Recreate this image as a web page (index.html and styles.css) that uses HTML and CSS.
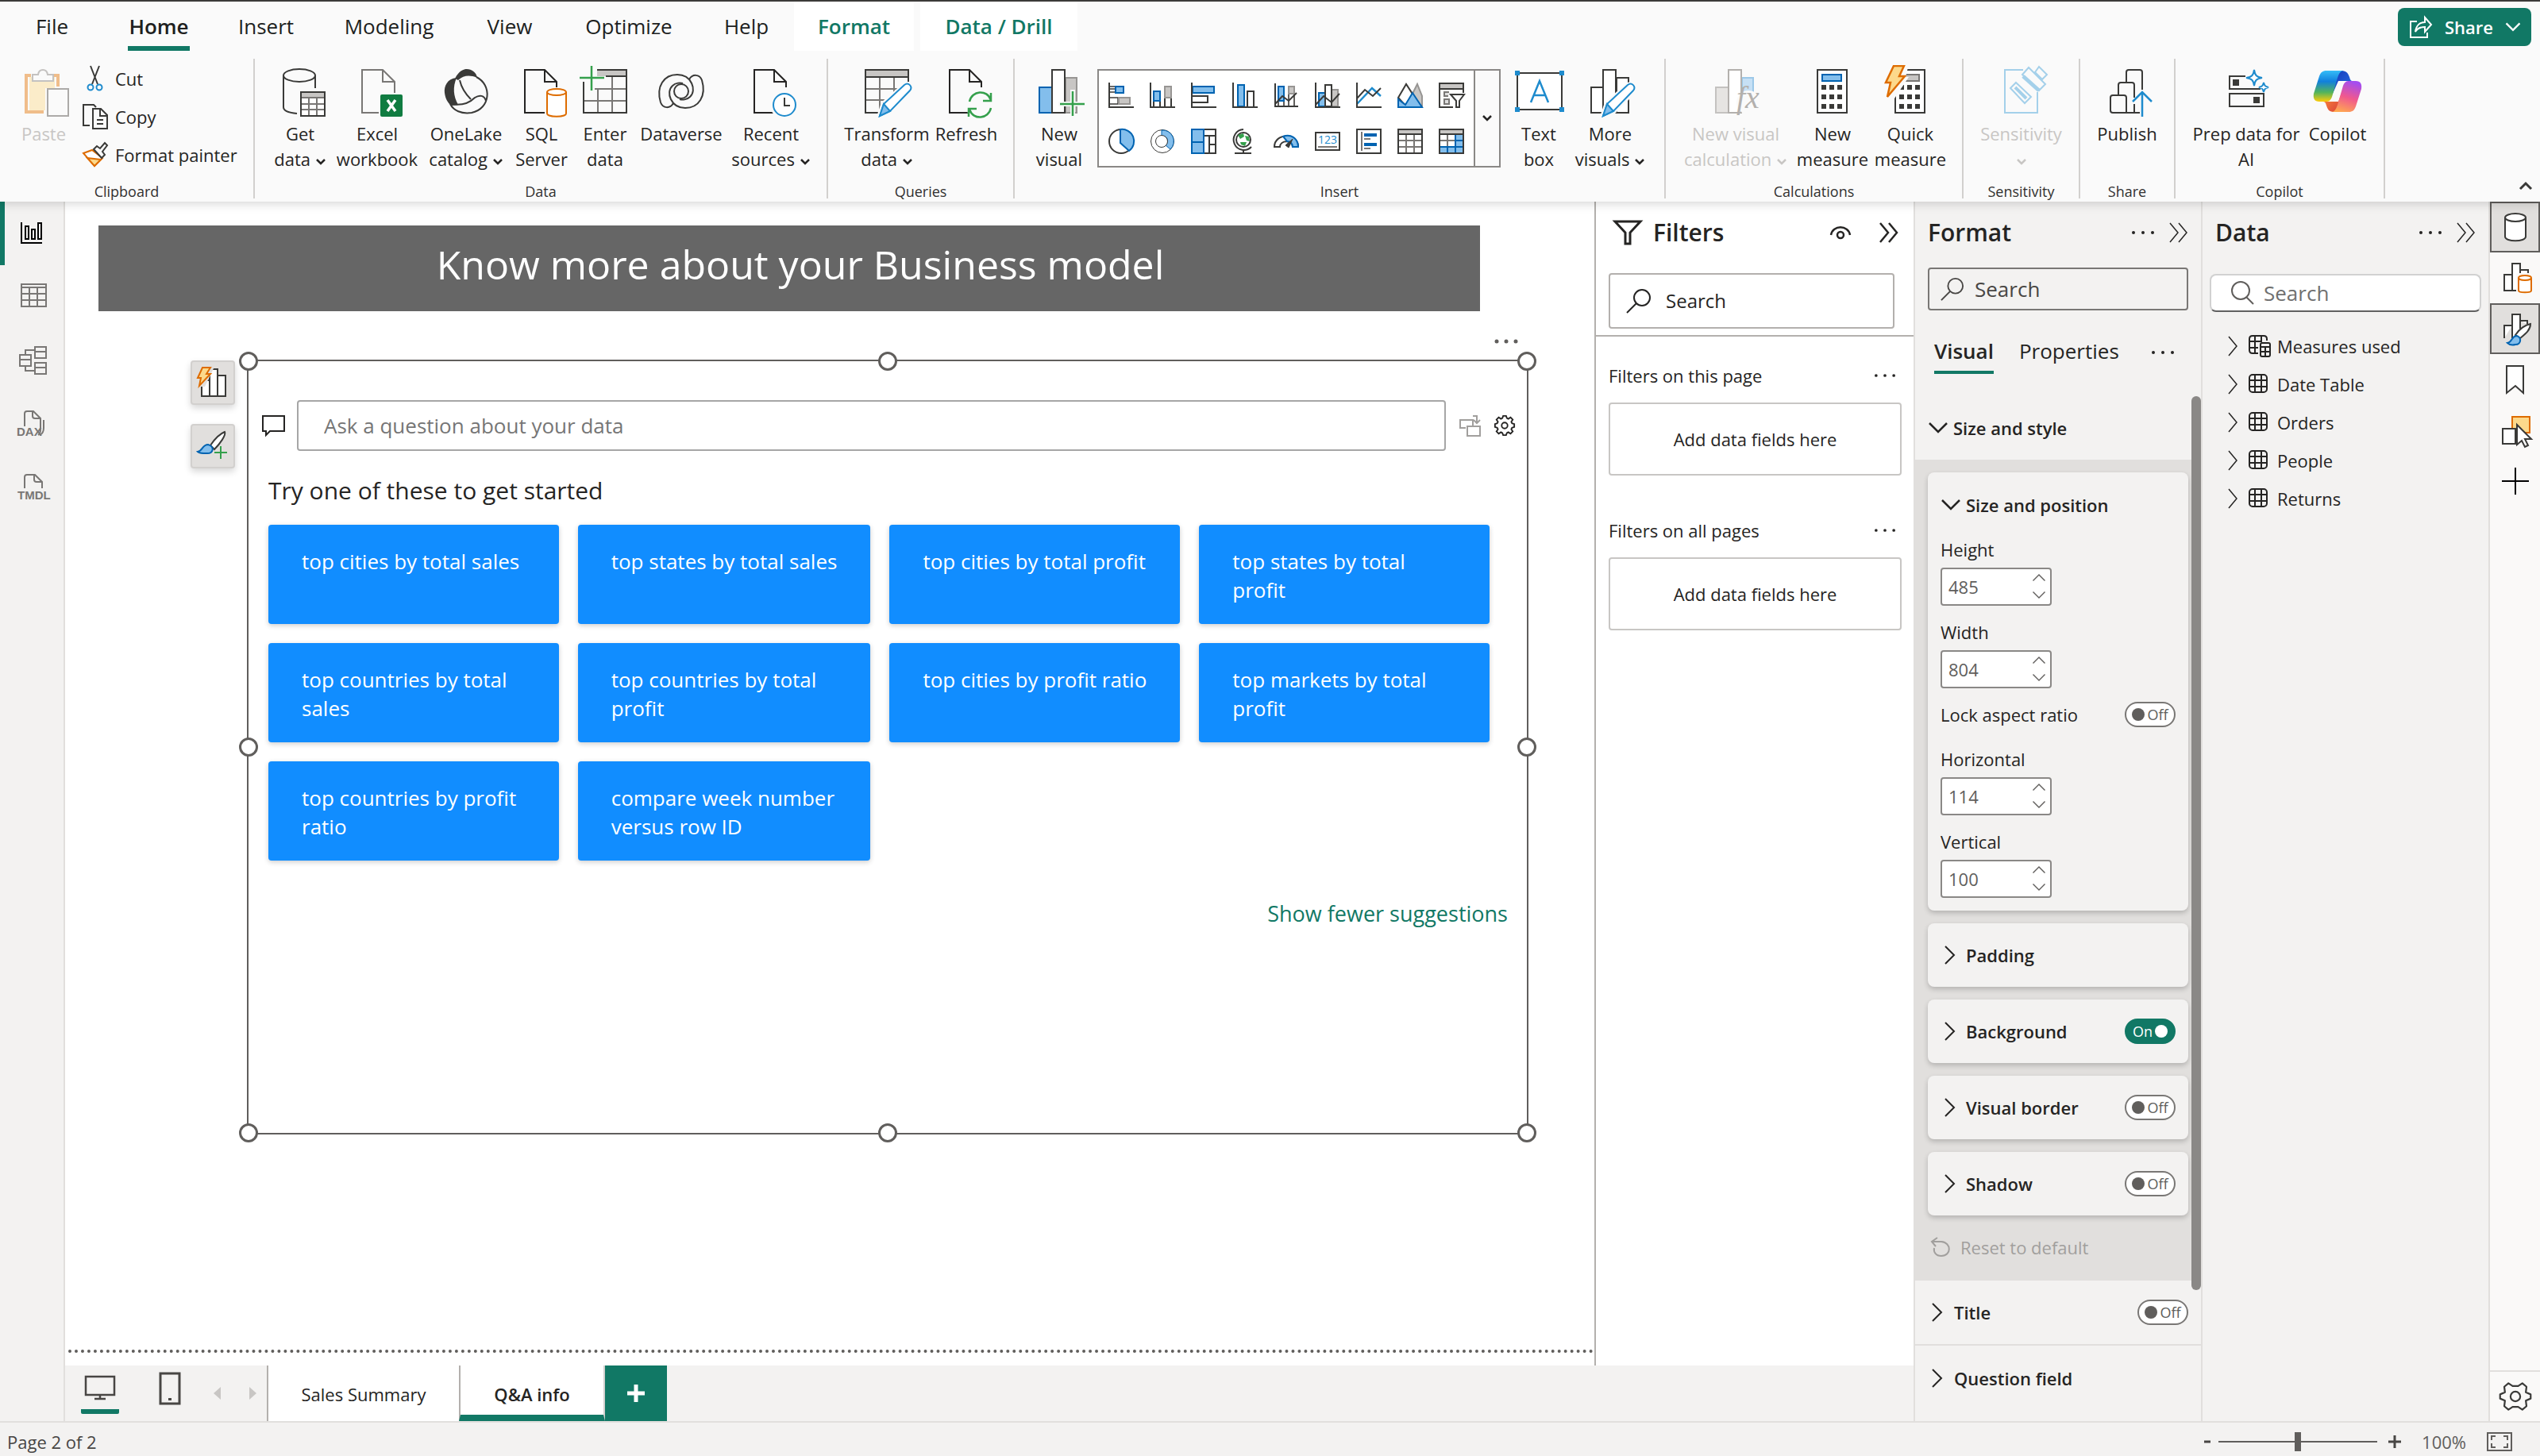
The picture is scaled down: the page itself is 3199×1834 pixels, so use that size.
FILE: index.html
```html
<!DOCTYPE html>
<html lang="en">
<head>
<meta charset="utf-8">
<title>Report editor</title>
<link rel="stylesheet" href="styles.css">
</head>
<body>
<svg class="defs" aria-hidden="true">
  <defs>
    <linearGradient id="cpA" x1="0" y1="0" x2="0" y2="1"><stop offset="0" stop-color="#35bdf8"/><stop offset=".35" stop-color="#1180dc"/><stop offset=".7" stop-color="#52b45c"/><stop offset="1" stop-color="#ffcc0a"/></linearGradient>
    <linearGradient id="cpB" x1=".6" y1="0" x2=".3" y2="1"><stop offset="0" stop-color="#a44df0"/><stop offset=".5" stop-color="#f0588e"/><stop offset="1" stop-color="#ffa850"/></linearGradient>
    <linearGradient id="cpC" x1="0" y1="0" x2="1" y2="1"><stop offset="0" stop-color="#1438b8"/><stop offset="1" stop-color="#2a72e8"/></linearGradient>
    <linearGradient id="cpD" x1="0" y1="0" x2="1" y2="1"><stop offset="0" stop-color="#ff9a3c"/><stop offset="1" stop-color="#d83a3a"/></linearGradient>
  </defs>
  <symbol id="drop" viewBox="0 0 14 10"><path d="M2 2l5 5 5-5" fill="none" stroke="currentColor" stroke-width="2.500"/></symbol>
  <symbol id="right" viewBox="0 0 16 26"><path d="M2 2l11 11L2 24" fill="none" stroke="currentColor" stroke-width="2"/></symbol>
  <symbol id="thin" viewBox="0 0 16 26"><path d="M2 1l10 12L2 25" fill="none" stroke="currentColor" stroke-width="1.500"/></symbol>
  <symbol id="down" viewBox="0 0 26 16"><path d="M2 2l11 11L24 2" fill="none" stroke="currentColor" stroke-width="2.5"/></symbol>
  <symbol id="collapse" viewBox="0 0 26 26"><path d="M2 1l10 12L2 25M13 1l10 12-10 12" fill="none" stroke="currentColor" stroke-width="1.500"/></symbol>
  <symbol id="dots" viewBox="0 0 32 8"><g fill="currentColor"><circle cx="4" cy="4" r="2"/><circle cx="16" cy="4" r="2"/><circle cx="28" cy="4" r="2"/></g></symbol>
  <symbol id="find" viewBox="0 0 32 32"><g fill="none" stroke="currentColor" stroke-width="2"><circle cx="20" cy="12" r="10"/><path d="M13 19L1 31"/></g></symbol>
  <symbol id="table" viewBox="0 0 28 28"><g fill="none" stroke="currentColor" stroke-width="2"><rect x="3" y="2" width="22" height="22" rx="4"/><path d="M3 9h22M3 17h22M10 2v22M18 2v22"/></g></symbol>
  <symbol id="doc" viewBox="0 0 64 64"><path d="M36 57H11V3h25l15 15v7M36 3v15h15" fill="none" stroke="currentColor" stroke-width="2"/></symbol>
  <symbol id="pencil" viewBox="0 0 64 64"><path d="M23 61l5-15 26-23c5-4 11 2 7 7L36 55z" fill="#fafafa" stroke="#fafafa" stroke-width="7"/><path d="M23 61l5-15 26-24c5-4 11 2 7 7L36 55z" fill="#fff" stroke="#1e8bcd" stroke-width="2"/><path d="M23 61l5-15 8 9z" fill="#83beec" stroke="#1e8bcd" stroke-width="2"/></symbol>
  <symbol id="bolt" viewBox="0 0 28 42"><path d="M12 1h13l-6 13h7L4 40l4-18H2z" fill="#fcd98b" stroke="#de6c00" stroke-width="2.5"/></symbol>
</svg>

<header class="ribbon">
  <div class="topbar">
    <nav class="menu" aria-label="Ribbon tabs">
      <a href="#">File</a><a href="#" class="on">Home</a><a href="#">Insert</a><a href="#">Modeling</a><a href="#">View</a><a href="#">Optimize</a><a href="#">Help</a><a href="#" class="ctx">Format</a><a href="#" class="ctx drill">Data / Drill</a>
    </nav>
    <button class="share"><svg width="30" height="30" viewBox="0 0 30 30"><path d="M10 8H2v20h21v-6M8 21c1-8 6-12 12-12V3l8 9-8 9v-6c-5 0-9 1-12 6z" fill="none" stroke="#fff" stroke-width="2"/></svg>Share<svg width="20" height="14" viewBox="0 0 26 16"><path d="M2 2l11 11L24 2" fill="none" stroke="#fff" stroke-width="3"/></svg></button>
  </div>
  <div class="tools">
    <section class="group clipboard">
      <div class="items">
        <button class="tool" disabled><svg class="big" viewBox="0 0 64 64"><path d="M16 10H10v46h22M44 10h6v14" fill="none" stroke="#f0bd8a" stroke-width="4"/><path d="M14 12h32v14H34v28H14z" fill="#fbecc9"/><path d="M18 17V9h7c1-8 11-8 12 0h7v8z" fill="#fafafa" stroke="#c4c2c0" stroke-width="2"/><rect x="37" y="27" width="26" height="34" fill="#fafafa" stroke="#acaaa8" stroke-width="2"/></svg>Paste</button>
        <div class="rows">
          <button><svg width="32" height="32" viewBox="0 0 32 32"><g fill="none" stroke="#3a3a38" stroke-width="2"><path d="M10 0l9 23M21 0l-9 23"/><g stroke="#1e8bcd"><circle cx="10" cy="27" r="3.500"/><circle cx="21" cy="27" r="3.500"/></g></g></svg>Cut</button>
          <button><svg width="32" height="32" viewBox="0 0 32 32"><g fill="none" stroke="#3a3a38" stroke-width="2"><path d="M9 27H1V1h13l3 3"/><path d="M13 31V6h10l8 8v17zM22 6v9h9M18 20h8M18 25h8"/></g></svg>Copy</button>
          <button><svg width="32" height="32" viewBox="0 0 32 32"><path d="M1 14l11-4 13 10-10 10z" fill="#fff" stroke="#de6c00" stroke-width="2"/><path d="M6 20l17 2-8 8z" fill="#fcd98b" stroke="#de6c00" stroke-width="2"/><path d="M14 9l4-4 4 3 6-7 3 3-6 8 3 4-4 4z" fill="#fafafa" stroke="#3a3a38" stroke-width="2"/></svg>Format painter</button>
        </div>
      </div>
      <h2>Clipboard</h2>
    </section>
    <section class="group data">
      <div class="items">
        <button class="tool"><svg class="big" viewBox="0 0 64 64"><g fill="none" stroke="#3a3a38" stroke-width="2"><ellipse cx="31" cy="10" rx="20" ry="8"/><path d="M11 10v40c0 4 6 7 17 8M51 10v16"/><path d="M33 31h30v30H33z" fill="#fff"/></g><path d="M34 32h28v6H34z" fill="#c8c6c4"/><path d="M34 38h28M34 46h28M34 53h28M43 38v22M53 38v22" stroke="#797775" stroke-width="2"/></svg>Get<br>data <svg class="dd"><use href="#drop"/></svg></button>
        <button class="tool"><svg class="big" viewBox="0 0 64 64"><path d="M34 57H13V3h26l15 15v14M39 3v15h15" fill="none" stroke="#797775" stroke-width="2"/><rect x="36" y="34" width="28" height="28" rx="2" fill="#107c41"/><path d="M45 41l10 14M55 41L45 55" stroke="#fff" stroke-width="3.5"/></svg>Excel<br>workbook</button>
        <button class="tool"><svg class="big" viewBox="0 0 64 64"><path d="M20 13C8 14 4 24 5 32c1 8 4 12 8 16l9-1c-6-11-7-22-2-34z" fill="#3a3a38"/><path d="M18 14C23 4 29 2 33 2c6 0 12 4 13 11-10-4-17-3-24 3z" fill="#3a3a38"/><path d="M45 12c20 10 18 40-6 45-13 2-23-3-27-11M24 16c2 9 7 17 14 24M12 46c11 2 22 1 31-8 6-4 12-3 14 4" fill="none" stroke="#3a3a38" stroke-width="2"/></svg>OneLake<br>catalog <svg class="dd"><use href="#drop"/></svg></button>
        <button class="tool"><svg class="big" viewBox="0 0 64 64"><use href="#doc"/><path d="M36 26h30v40H36z" fill="#fafafa"/><g fill="#fff" stroke="#de6c00" stroke-width="2"><path d="M39 31v27c0 5 24 5 24 0V31"/><ellipse cx="51" cy="31" rx="12" ry="4"/></g></svg>SQL<br>Server</button>
        <button class="tool"><svg class="big" viewBox="0 0 64 64"><path d="M22 4h37v7H22z" fill="#c8c6c4"/><path d="M19 27h40M5 42h54M23 27v30M41 12v45" stroke="#797775" stroke-width="2"/><path d="M22 3h37v54H5V18M33 11h26" fill="none" stroke="#3a3a38" stroke-width="2"/><path d="M15 -2v31M0 13h31" stroke="#35a04c" stroke-width="2.5"/></svg>Enter<br>data</button>
        <button class="tool"><svg class="big" viewBox="0 0 64 64"><g fill="none" stroke="#3a3a38" stroke-width="2"><path id="dv" d="M22 45C18 52 9 52 6 44 0 24 10 9 27 9c18 0 25 20 16 28-4 4-10 4-13 3"/><use href="#dv" transform="rotate(180 32 30)"/><circle cx="32" cy="30" r="9"/></g></svg>Dataverse</button>
        <button class="tool"><svg class="big" viewBox="0 0 64 64"><use href="#doc"/><circle cx="49" cy="47" r="18" fill="#fafafa"/><circle cx="49" cy="47" r="14" fill="#fff" stroke="#1e8bcd" stroke-width="2"/><path d="M49 38v10h7" fill="none" stroke="#3a3a38" stroke-width="2"/></svg>Recent<br>sources <svg class="dd"><use href="#drop"/></svg></button>
      </div>
      <h2>Data</h2>
    </section>
    <section class="group queries">
      <div class="items">
        <button class="tool"><svg class="big" viewBox="0 0 64 64"><path d="M5 4h54v7H5z" fill="#c8c6c4"/><path d="M5 27h54M5 41h40M23 12v45M41 12v30" stroke="#797775" stroke-width="2"/><path d="M59 18V3H5v54h20M5 12h54" fill="none" stroke="#3a3a38" stroke-width="2"/><use href="#pencil"/></svg>Transform<br>data <svg class="dd"><use href="#drop"/></svg></button>
        <button class="tool"><svg class="big" viewBox="0 0 64 64"><use href="#doc"/><circle cx="49" cy="47" r="18" fill="#fafafa"/><path d="M36 43c3-14 22-16 27-2M63 32v10H53M63 51c-3 14-22 16-27 2M35 62V52h10" fill="none" stroke="#35a04c" stroke-width="2.5"/></svg>Refresh</button>
      </div>
      <h2>Queries</h2>
    </section>
    <section class="group insert">
      <div class="items">
        <button class="tool"><svg class="big" viewBox="0 0 64 64"><path d="M7 25h16v32H7z" fill="#83beec" stroke="#0063b1" stroke-width="2"/><path d="M40 13h14v44H40z" fill="#c8c6c4" stroke="#979593" stroke-width="2"/><path d="M23 3h16v54H23z" fill="#fff" stroke="#3a3a38" stroke-width="2"/><path d="M49 28v36M31 46h34" stroke="#fafafa" stroke-width="6"/><path d="M49 30v31M33 46h31" stroke="#35a04c" stroke-width="2.5"/></svg>New<br>visual</button>
        <div class="gallery">
          <div class="cells">
            <button aria-label="Stacked bar chart"><svg viewBox="0 0 32 32"><path d="M1 8h8M1 12h8M1 19h12M1 27h12M1 5h8M12 19v8" stroke="#3a3a38" stroke-width="1.5" fill="none"/><path d="M9 5h10v8H9z" fill="#83beec" stroke="#0063b1" stroke-width="2"/><path d="M13 19h14v8H13z" fill="#c8c6c4" stroke="#979593" stroke-width="2"/><path d="M1 0v31h31" fill="none" stroke="#3a3a38" stroke-width="2"/></svg></button>
            <button aria-label="Stacked column chart"><svg viewBox="0 0 32 32"><path d="M5 24v7M13 24v7M19 20v11M27 20v11" stroke="#3a3a38" stroke-width="2"/><path d="M5 11h8v12H5z" fill="#83beec" stroke="#0063b1" stroke-width="2"/><path d="M19 5h8v14h-8z" fill="#c8c6c4" stroke="#979593" stroke-width="2"/><path d="M1 0v31h31" fill="none" stroke="#3a3a38" stroke-width="2"/></svg></button>
            <button aria-label="Clustered bar chart"><svg viewBox="0 0 32 32"><path d="M1 17h20v8H1z" fill="#fff" stroke="#3a3a38" stroke-width="2"/><path d="M2 5h27v8H2z" fill="#83beec" stroke="#0063b1" stroke-width="2"/><path d="M1 0v31h31" fill="none" stroke="#3a3a38" stroke-width="2"/></svg></button>
            <button aria-label="Clustered column chart"><svg viewBox="0 0 32 32"><path d="M19 11h8v20h-8z" fill="#fff" stroke="#3a3a38" stroke-width="2"/><path d="M7 3h8v27H7z" fill="#83beec" stroke="#0063b1" stroke-width="2"/><path d="M1 0v31h31" fill="none" stroke="#3a3a38" stroke-width="2"/></svg></button>
            <button aria-label="Line and stacked column chart"><svg viewBox="0 0 32 32"><path d="M6 24v6M13 24v6M19 14v16M26 14v16" stroke="#605e5c" stroke-width="2"/><path d="M6 5h7v18H6z" fill="#83beec" stroke="#0063b1" stroke-width="2"/><path d="M19 5h7v9h-7z" fill="#c8c6c4" stroke="#979593" stroke-width="2"/><path d="M2 1v29h29M2 27l9-10 8 6 10-10" fill="none" stroke="#3a3a38" stroke-width="2"/></svg></button>
            <button aria-label="Line and clustered column chart"><svg viewBox="0 0 32 32"><path d="M5 13h8v17H5z" fill="#83beec" stroke="#0063b1" stroke-width="2"/><path d="M21 9h8v21h-8z" fill="#c8c6c4" stroke="#979593" stroke-width="2"/><path d="M13 3h8v27h-8z" fill="#fff" stroke="#3a3a38" stroke-width="2"/><path d="M1 0v31h31M1 28l10-11 10 8 10-11" fill="none" stroke="#3a3a38" stroke-width="2"/></svg></button>
            <button aria-label="Line chart"><svg viewBox="0 0 32 32"><path d="M1 27L20 7l11 10" fill="none" stroke="#1e8bcd" stroke-width="2.5"/><path d="M1 20L11 9l10 8L31 7M1 0v31h31" fill="none" stroke="#3a3a38" stroke-width="2"/></svg></button>
            <button aria-label="Area chart"><svg viewBox="0 0 32 32"><path d="M18 16l7-14 6 15v14" fill="#c8c6c4" stroke="#979593" stroke-width="2"/><path d="M1 19L11 2l11 17-11 11z" fill="#fff" stroke="#3a3a38" stroke-width="2"/><path d="M1 21l9 7 9-15 12 18H1z" fill="#83beec" stroke="#0063b1" stroke-width="2"/></svg></button>
            <button aria-label="Slicer"><svg viewBox="0 0 32 32"><path d="M1 2h30v5H1z" fill="#c8c6c4"/><path d="M31 13V1H1v30h17M1 8h30" fill="none" stroke="#3a3a38" stroke-width="2"/><path d="M13 12H7v5h5M7 21h6v6H7z" fill="#ddd" stroke="#797775" stroke-width="2"/><path d="M15 15h17l-6 8v8h-4v-8z" fill="#fff" stroke="#3a3a38" stroke-width="2"/></svg></button>
            <button aria-label="Pie chart"><svg viewBox="0 0 32 32"><circle cx="16" cy="16" r="15" fill="#fff" stroke="#3a3a38" stroke-width="2"/><path d="M15 1v17l11 10a15 15 0 0 0-11-27z" fill="#83beec" stroke="#0063b1" stroke-width="2"/></svg></button>
            <button aria-label="Donut chart"><svg viewBox="0 0 32 32"><g fill="#fff" stroke="#3a3a38"><circle cx="16" cy="16" r="14.500"/></g><path d="M15 2v7c9 0 9 9 5 12l6 5A14 14 0 0 0 15 2z" fill="#83beec" stroke="#0063b1"/><circle cx="15" cy="16" r="7.500" fill="#fff" stroke="#3a3a38"/></svg></button>
            <button aria-label="Treemap"><svg viewBox="0 0 32 32"><path d="M16 1h15v30H16zM16 9h15M23 9v22M23 20h8" fill="#fff" stroke="#3a3a38" stroke-width="2"/><path d="M1 1h15v30H1zM1 17h15" fill="#83beec" stroke="#0063b1" stroke-width="2"/></svg></button>
            <button aria-label="Map"><svg viewBox="0 0 32 32"><circle cx="14" cy="14" r="9" fill="#fff" stroke="#3a3a38" stroke-width="2"/><path d="M7 8l7-2 1 4-5 3zM16 9l5 1 1 6-4-1zM10 17l8 0-2 5-5-2z" fill="#35a04c"/><path d="M14 1A13 13 0 1 0 24 23M14 27v4M3 31h21" fill="none" stroke="#3a3a38" stroke-width="2"/></svg></button>
            <button aria-label="Gauge"><svg viewBox="0 0 32 32"><path d="M1 23c0-18 30-18 30 0h-7c0-9-16-9-16 0z" fill="#fff" stroke="#3a3a38" stroke-width="2"/><path d="M12 10c9-4 19 2 19 13h-7c0-4-3-7-7-7z" fill="#83beec" stroke="#0063b1" stroke-width="2"/><path d="M24 13l-9 8 4 3z" fill="#3a3a38" stroke="#3a3a38"/></svg></button>
            <button aria-label="Card"><svg viewBox="0 0 32 32"><path d="M1 5h30v22H1z" fill="#fff" stroke="#3a3a38" stroke-width="2"/><path d="M4 23h24" stroke="#797775" stroke-width="2"/><text x="4" y="19" class="num">123</text></svg></button>
            <button aria-label="Multi-row card"><svg viewBox="0 0 32 32"><path d="M1 1h30v30H1z" fill="#fff" stroke="#3a3a38" stroke-width="2"/><path d="M7 4v24M10 13h8M10 25h8" stroke="#797775" stroke-width="2"/><path d="M10 8h16M10 20h16" stroke="#0063b1" stroke-width="4"/></svg></button>
            <button aria-label="Table"><svg viewBox="0 0 32 32"><path d="M1 2h30v5H1z" fill="#c8c6c4"/><path d="M1 15h30M1 23h30M11 8v23M21 8v23" stroke="#797775" stroke-width="2"/><path d="M1 1h30v30H1zM1 7h30" fill="none" stroke="#3a3a38" stroke-width="2"/></svg></button>
            <button aria-label="Matrix"><svg viewBox="0 0 32 32"><path d="M1 2h30v5H1z" fill="#c8c6c4"/><path d="M1 23h20V8h10v23H1z" fill="#83beec"/><path d="M1 15h20M11 8v15" stroke="#797775" stroke-width="2"/><path d="M1 23h30M21 8v23M11 23v8M21 15h10" stroke="#0063b1" stroke-width="2"/><path d="M1 1h30v30H1zM1 7h30" fill="none" stroke="#3a3a38" stroke-width="2"/></svg></button>
          </div>
          <button class="more" aria-label="More visual types"><svg class="dd"><use href="#drop"/></svg></button>
        </div>
        <button class="tool"><svg class="big" viewBox="0 0 64 64"><path d="M4 7h56v46H4z" fill="#fff" stroke="#3a3a38" stroke-width="2"/><path d="M1 4h6v6H1zM57 4h6v6h-6zM1 50h6v6H1zM57 50h6v6h-6z" fill="#1e8bcd"/><path d="M21 44L32 17l11 27M24 35h16" fill="none" stroke="#1e8bcd" stroke-width="2.500"/></svg>Text<br>box</button>
        <button class="tool"><svg class="big" viewBox="0 0 64 64"><g fill="#fff" stroke="#3a3a38" stroke-width="2"><path d="M8 25h15v32H8zM40 13h15v44H40zM23 3h16v54H23z"/></g><use href="#pencil"/></svg>More<br>visuals <svg class="dd"><use href="#drop"/></svg></button>
      </div>
      <h2>Insert</h2>
    </section>
    <section class="group calc">
      <div class="items">
        <button class="tool" disabled><svg class="big" viewBox="0 0 64 64"><path d="M7 25h16v32H7z" fill="#e6e4e2" stroke="#c4c2c0" stroke-width="2"/><path d="M40 13h14v20H40z" fill="#c6e0f5" stroke="#9cc8e8" stroke-width="2"/><path d="M23 57V3h16v54z" fill="#fff" stroke="#b3b0ad" stroke-width="2"/><circle cx="48" cy="44" r="15" fill="#fafafa"/><text x="33" y="51" class="fx">fx</text></svg>New visual<br>calculation <svg class="dd"><use href="#drop"/></svg></button>
        <button class="tool"><svg class="big" viewBox="0 0 64 64"><path id="calc" d="M13 3h37v54H13z" fill="#fff" stroke="#3a3a38" stroke-width="2"/><path d="M19 9h24v8H19z" fill="#83beec" stroke="#0063b1" stroke-width="2"/><path id="keys" d="M18 25h26M18 37h26M18 49h26" stroke="#3a3a38" stroke-width="6" stroke-dasharray="6 4"/></svg>New<br>measure</button>
        <button class="tool"><svg class="big" viewBox="0 0 64 64"><use href="#calc"/><path d="M19 9h24v8H19z" fill="#c8c6c4" stroke="#797775" stroke-width="2"/><use href="#keys"/><path d="M12 -4h18L26 12h4L10 42-2 24z" fill="#fafafa"/><svg x="-1" y="-3" width="28" height="42"><use href="#bolt"/></svg></svg>Quick<br>measure</button>
      </div>
      <h2>Calculations</h2>
    </section>
    <section class="group sens">
      <div class="items">
        <button class="tool" disabled><svg class="big" viewBox="0 0 64 64"><g fill="none" stroke="#a4d0ea" stroke-width="2"><path d="M34 3H11v54h41V31"/><path d="M25 19l19 18-8 8-18-19z"/><path d="M24 25l14 14" stroke-width="4"/><path d="M41 0l21 21-8 8L33 9z"/><path d="M34 11l20 18" stroke-width="5"/><path d="M49 6l5-7 10 10-6 6z"/></g></svg>Sensitivity<br><svg class="dd"><use href="#drop"/></svg></button>
      </div>
      <h2>Sensitivity</h2>
    </section>
    <section class="group pub">
      <div class="items">
        <button class="tool"><svg class="big" viewBox="0 0 64 64"><g fill="none" stroke="#3a3a38" stroke-width="2"><path d="M31 19V6q0-3 3-3h14q3 0 3 3v22M21 34V22q0-3 3-3h14q3 0 3 3v16M41 46v11"/><path d="M48 57H14q-3 0-3-3V38q0-3 3-3h14q3 0 3 3v19"/></g><path d="M51 62V32M39 43l12-12 12 12" fill="none" stroke="#1e8bcd" stroke-width="2.500"/></svg>Publish</button>
      </div>
      <h2>Share</h2>
    </section>
    <section class="group cop">
      <div class="items">
        <button class="tool"><svg class="big" viewBox="0 0 64 64"><g fill="none" stroke="#3a3a38" stroke-width="2"><path d="M31 11H11v16h39M11 33h43v16H11z"/></g><path d="M15 15h8v8h-8zM41 37h8v8h-8z" fill="#3a3a38"/><path d="M42 3c1 7 3 9 10 10-7 1-9 3-10 10-1-7-3-9-10-10 7-1 9-3 10-10zM54 19c1 4 2 5 6 6-4 1-5 2-6 6-1-4-2-5-6-6 4-1 5-2 6-6z" fill="#fff" stroke="#1e8bcd" stroke-width="2"/></svg>Prep data for<br>AI</button>
        <button class="tool"><svg class="big" viewBox="0 0 64 64"><path d="M36 4c6 0 9 2 11 8 1 4 2 5 4 5H33l-8 18 5-28z" fill="url(#cpC)"/><path d="M28 56c-6 0-8-2-10-8-1-4-2-5-5-5h20l6-16-5 26z" fill="url(#cpD)"/><path d="M18 4h22c-4 0-6 3-8 9l-7 24c-2 5-4 6-8 6H9c-6 0-8-4-7-10L9 11c2-5 4-7 9-7z" fill="url(#cpA)"/><path d="M46 56H24c4 0 6-3 8-9l7-24c2-5 4-6 8-6h8c6 0 8 4 7 10l-7 22c-2 5-4 7-9 7z" fill="url(#cpB)"/></svg>Copilot</button>
      </div>
      <h2>Copilot</h2>
    </section>
    <button class="fold" aria-label="Collapse ribbon"><svg width="18" height="12" viewBox="0 0 18 12"><path d="M2 10l7-7 7 7" fill="none" stroke="#3a3a38" stroke-width="3"/></svg></button>
  </div>
</header>

<main>
  <nav class="views" aria-label="Views">
    <a href="#" class="on" aria-label="Report view"><svg viewBox="0 0 48 48"><path d="M11 10v26h26M16 15h4v16h-4zM24 19h4v12h-4zM32 11h4v20h-4z" fill="none" stroke="#000" stroke-width="2"/></svg></a>
    <a href="#" aria-label="Table view"><svg viewBox="0 0 48 48"><path d="M11 8h31v28H11zM11 12h31M11 20h31M11 28h31M21 12v24M31 12v24" fill="none" stroke="#797775" stroke-width="2"/></svg></a>
    <a href="#" aria-label="Model view"><svg viewBox="0 0 48 48"><path d="M9 17h14v14H9zM9 23h14M28 7h14v14H28zM28 13h14M28 27h14v14H28zM28 33h14M16 17v-6h12M16 31v6h12" fill="none" stroke="#797775" stroke-width="2"/></svg></a>
    <a href="#" aria-label="DAX query view"><svg viewBox="0 0 48 48"><path d="M15 27V11q0-3 3-3h8l9 9v14q0 5-3 7M25 8v6q0 3 3 3h7M39 19v10q0 7-5 9" fill="none" stroke="#797775" stroke-width="2"/><text x="5" y="39" class="tag">DAX</text></svg></a>
    <a href="#" aria-label="TMDL view"><svg viewBox="0 0 48 48"><path d="M15 25V11q0-3 3-3h10l9 9v8M27 8v6q0 3 3 3h7" fill="none" stroke="#797775" stroke-width="2"/><text x="6" y="39" class="tag">TMDL</text></svg></a>
  </nav>

  <div class="work">
    <div class="stage">
      <div class="canvas">
        <h1>Know more about your Business model</h1>
        <div class="visual">
          <button class="vmore" aria-label="More options"><svg width="36" height="8" viewBox="0 0 32 8"><g fill="#605e5c"><circle cx="4" cy="4" r="2.500"/><circle cx="16" cy="4" r="2.500"/><circle cx="28" cy="4" r="2.500"/></g></svg></button>
          <div class="side">
            <button aria-label="Suggest a visual type"><svg viewBox="0 0 40 40"><g fill="#fff" stroke="#3a3a38" stroke-width="2"><path d="M6 17h10v20H6zM16 3h10v34H16zM26 11h10v26H26z"/></g><path d="M4 0h18L10 25H2z" fill="#e1dfdd"/><path d="M7 1h10l-5 8h5L3 24l2-10H1z" fill="#fcd98b" stroke="#de6c00" stroke-width="2"/></svg></button>
            <button aria-label="Format visual"><svg viewBox="0 0 40 40"><path d="M17 19C23 10 30 4 35 2c2 4-6 15-13 22z" fill="#fff" stroke="#3a3a38" stroke-width="2"/><path d="M1 27c6-1 6-9 13-9 8 2 8 12-3 11-4 0-8 0-10-2z" fill="#83beec" stroke="#0063b1" stroke-width="2"/><path d="M30 20v16M22 28h16" stroke="#35a04c" stroke-width="2"/></svg></button>
          </div>
          <i class="h nw"></i><i class="h n"></i><i class="h ne"></i><i class="h w"></i><i class="h e"></i><i class="h sw"></i><i class="h s"></i><i class="h se"></i>
          <div class="ask">
            <svg width="30" height="28" viewBox="0 0 30 28"><path d="M1 2h27v19H10l-5 5v-5H1z" fill="none" stroke="#252423" stroke-width="2"/></svg>
            <input type="text" aria-label="Ask a question" placeholder="Ask a question about your data">
            <svg class="conv" width="30" height="28" viewBox="0 0 30 28"><g fill="none" stroke="#a19f9d" stroke-width="2"><path d="M9 17H2V7h16v7M11 15h16v12H11zM18 2h5v8M19 7l4 4 4-4"/></g></svg>
            <svg width="28" height="28" viewBox="0 0 30 30"><g fill="none" stroke="#252423" stroke-width="2"><circle cx="15" cy="15" r="4"/><path d="M12 5l1-3h4l1 3 2 1 3-2 3 3-2 3 1 2 3 1v4l-3 1-1 2 2 3-3 3-3-2-2 1-1 3h-4l-1-3-2-1-3 2-3-3 2-3-1-2-3-1v-4l3-1 1-2-2-3 3-3 3 2z"/></g></svg>
          </div>
          <p class="try">Try one of these to get started</p>
          <div class="cards">
            <button><span>top cities by total sales</span></button><button><span>top states by total sales</span></button><button><span>top cities by total profit</span></button><button><span>top states by total<br>profit</span></button>
            <button><span>top countries by total<br>sales</span></button><button><span>top countries by total<br>profit</span></button><button><span>top cities by profit ratio</span></button><button><span>top markets by total<br>profit</span></button>
            <button><span>top countries by profit<br>ratio</span></button><button><span>compare week number<br>versus row ID</span></button>
          </div>
          <a class="fewer" href="#">Show fewer suggestions</a>
        </div>
        <div class="edge"></div>
      </div>
      <aside class="filters">
        <header><svg width="36" height="32" viewBox="0 0 36 32"><path d="M2 2h32L21 16v14h-6V16z" fill="none" stroke="#252423" stroke-width="3"/></svg><h2>Filters</h2><svg class="eye" width="28" height="20" viewBox="0 0 28 20"><g fill="none" stroke="#252423" stroke-width="2.500"><path d="M2 13C4 0 24 0 26 13"/><circle cx="14" cy="13" r="4"/></g></svg><svg width="26" height="26" viewBox="0 0 26 26"><path d="M2 1l10 12L2 25M13 1l10 12-10 12" fill="none" stroke="#252423" stroke-width="2.500"/></svg></header>
        <label class="search"><svg width="32" height="32"><use href="#find"/></svg><input type="text" placeholder="Search" aria-label="Search filters"></label>
        <section><h3>Filters on this page<svg width="26" height="8" viewBox="2 0 28 8"><use href="#dots" width="32" height="8"/></svg></h3><div class="well">Add data fields here</div></section>
        <section><h3>Filters on all pages<svg width="26" height="8" viewBox="2 0 28 8"><use href="#dots" width="32" height="8"/></svg></h3><div class="well">Add data fields here</div></section>
      </aside>
    </div>
    <div class="pages">
      <button class="dev on" aria-label="Desktop layout"><svg width="40" height="32" viewBox="0 0 40 32"><path d="M2 2h36v23H2zM20 25v5M13 30h14" fill="none" stroke="#484644" stroke-width="2.500"/></svg></button>
      <button class="dev" aria-label="Mobile layout"><svg width="28" height="42" viewBox="0 0 28 42"><path d="M2 2h24v38H2z" fill="none" stroke="#484644" stroke-width="3"/><path d="M12 33h4v3h-4z" fill="#484644"/></svg></button>
      <div class="arrows"><svg width="10" height="16" viewBox="0 0 10 16"><path d="M9 0v16L0 8z" fill="#c8c6c4"/></svg><svg width="10" height="16" viewBox="0 0 10 16"><path d="M1 0v16l9-8z" fill="#c8c6c4"/></svg></div>
      <a href="#" class="page">Sales Summary</a><a href="#" class="page on">Q&amp;A info</a>
      <button class="add" aria-label="New page"><svg width="22" height="22" viewBox="0 0 22 22"><path d="M11 0v22M0 11h22" stroke="#fff" stroke-width="5"/></svg></button>
    </div>
  </div>

  <aside class="pane format">
    <header><h2>Format</h2><svg width="32" height="8"><use href="#dots"/></svg><svg width="26" height="26"><use href="#collapse"/></svg></header>
    <label class="search"><svg width="30" height="30"><use href="#find"/></svg><input type="text" placeholder="Search" aria-label="Search format settings"></label>
    <div class="tabs"><a href="#" class="on">Visual</a><a href="#">Properties</a><svg width="32" height="8"><use href="#dots"/></svg></div>
    <div class="scroll">
      <button class="sec first"><svg class="cd"><use href="#down"/></svg>Size and style</button>
      <div class="body">
        <div class="card open">
          <button class="head"><svg class="cd"><use href="#down"/></svg>Size and position</button>
          <label for="hgt">Height</label><div class="spin"><input id="hgt" type="text" value="485"><svg viewBox="0 0 18 32"><path d="M1 8l8-8 8 8M1 23l8 8 8-8" fill="none" stroke="#605e5c" stroke-width="1.500"/></svg></div>
          <label for="wid">Width</label><div class="spin"><input id="wid" type="text" value="804"><svg viewBox="0 0 18 32"><path d="M1 8l8-8 8 8M1 23l8 8 8-8" fill="none" stroke="#605e5c" stroke-width="1.500"/></svg></div>
          <label class="lock">Lock aspect ratio<span class="toggle"><input type="checkbox">Off</span></label>
          <label for="hor">Horizontal</label><div class="spin"><input id="hor" type="text" value="114"><svg viewBox="0 0 18 32"><path d="M1 8l8-8 8 8M1 23l8 8 8-8" fill="none" stroke="#605e5c" stroke-width="1.500"/></svg></div>
          <label for="ver">Vertical</label><div class="spin"><input id="ver" type="text" value="100"><svg viewBox="0 0 18 32"><path d="M1 8l8-8 8 8M1 23l8 8 8-8" fill="none" stroke="#605e5c" stroke-width="1.500"/></svg></div>
        </div>
        <div class="card"><svg class="cr"><use href="#right"/></svg>Padding</div>
        <label class="card"><svg class="cr"><use href="#right"/></svg>Background<span class="toggle on">On<input type="checkbox" checked></span></label>
        <label class="card"><svg class="cr"><use href="#right"/></svg>Visual border<span class="toggle"><input type="checkbox">Off</span></label>
        <label class="card"><svg class="cr"><use href="#right"/></svg>Shadow<span class="toggle"><input type="checkbox">Off</span></label>
        <button class="reset" disabled><svg width="26" height="26" viewBox="0 0 26 26"><path d="M9 1L2 6l5 6M2 6h12c13 1 13 18 0 18-7 0-10-5-9-10" fill="none" stroke="#a19f9d" stroke-width="2"/></svg>Reset to default</button>
      </div>
      <label class="sec"><svg class="cr"><use href="#right"/></svg>Title<span class="toggle"><input type="checkbox">Off</span></label>
      <button class="sec last"><svg class="cr"><use href="#right"/></svg>Question field</button>
      <div class="bar"></div>
    </div>
  </aside>

  <aside class="pane fields">
    <header><h2>Data</h2><svg width="32" height="8"><use href="#dots"/></svg><svg width="26" height="26"><use href="#collapse"/></svg></header>
    <label class="search"><svg width="30" height="30" viewBox="0 0 30 30"><g fill="none" stroke="#605e5c" stroke-width="2"><circle cx="13" cy="12" r="11"/><path d="M20 20l9 9"/></g></svg><input type="text" placeholder="Search" aria-label="Search data"></label>
    <ul>
      <li><svg class="cr"><use href="#thin"/></svg><svg width="32" height="30" viewBox="0 0 32 30"><g fill="none" stroke="#252423" stroke-width="2"><path d="M14 24H7q-4 0-4-4V6q0-4 4-4h14q4 0 4 4v2M3 9h16M3 17h11M10 2v22M18 2v7"/><rect x="17" y="11" width="12" height="17" rx="2"/><path d="M17 16h12M17 22h12M23 16v12"/></g></svg>Measures used</li>
      <li><svg class="cr"><use href="#thin"/></svg><svg width="32" height="28" viewBox="0 0 32 28"><use href="#table" width="28" height="28"/></svg>Date Table</li>
      <li><svg class="cr"><use href="#thin"/></svg><svg width="32" height="28" viewBox="0 0 32 28"><use href="#table" width="28" height="28"/></svg>Orders</li>
      <li><svg class="cr"><use href="#thin"/></svg><svg width="32" height="28" viewBox="0 0 32 28"><use href="#table" width="28" height="28"/></svg>People</li>
      <li><svg class="cr"><use href="#thin"/></svg><svg width="32" height="28" viewBox="0 0 32 28"><use href="#table" width="28" height="28"/></svg>Returns</li>
    </ul>
  </aside>

  <nav class="rail" aria-label="Pane switcher">
    <button class="on" aria-label="Data"><svg viewBox="0 0 48 48"><g fill="#fff" stroke="#3a3a38" stroke-width="2"><path d="M11 12v24c0 7 26 7 26 0V12"/><ellipse cx="24" cy="12" rx="13" ry="5"/></g></svg></button>
    <button aria-label="Build"><svg viewBox="0 0 48 48"><g fill="#fff" stroke="#3a3a38" stroke-width="2"><path d="M10 20h10v20H10zM30 14h10v26H30zM20 6h10v34H20z"/></g><path d="M25 18h22v28H25z" fill="#faf9f8"/><g fill="#fff" stroke="#de6c00" stroke-width="2"><path d="M28 24v16c0 3 16 3 16 0V24"/><ellipse cx="36" cy="24" rx="8" ry="3"/></g></svg></button>
    <button class="on" aria-label="Format"><svg viewBox="0 0 48 48"><path d="M10 36V20h10M20 36V6h10v18M30 14h9v4" fill="#fff" stroke="#3a3a38" stroke-width="2"/><path d="M24 32C29 24 37 19 43 18c0 8-7 13-13 18z" fill="#fff" stroke="#3a3a38" stroke-width="2"/><path d="M14 42c6-1 5-8 11-9 7 1 7 11-1 11-4 1-8 0-10-2z" fill="#83beec" stroke="#0063b1" stroke-width="2"/></svg></button>
    <button aria-label="Bookmarks"><svg viewBox="0 0 48 48"><path d="M13 7h21v34l-10-9-11 9z" fill="#fff" stroke="#3a3a38" stroke-width="2"/></svg></button>
    <button aria-label="Selection"><svg viewBox="0 0 48 48"><path d="M20 7h22v20H20z" fill="#fcd98b" stroke="#de6c00" stroke-width="2"/><path d="M8 22h16v19H8z" fill="#fff" stroke="#3a3a38" stroke-width="2"/><path d="M26 17v25l6-5 4 8 4-2-4-8h8z" fill="#fff" stroke="#3a3a38" stroke-width="2"/></svg></button>
    <button aria-label="Add pane"><svg viewBox="0 0 48 48"><path d="M24 7v34M7 24h34" stroke="#000" stroke-width="2"/></svg></button>
    <button class="gear" aria-label="Pane settings"><svg viewBox="0 0 48 48"><g fill="none" stroke="#3a3a38" stroke-width="2.500"><circle cx="24" cy="24" r="7"/><path d="M20 9l-6-4-6 5 1 8-7 3v6l7 3-1 8 6 5 6-4h8l6 4 6-5-1-8 7-3v-6l-7-3 1-8-6-5-6 4z" stroke-linejoin="round"/></g></svg></button>
  </nav>
</main>

<footer class="status">
  <span class="pg">Page 2 of 2</span>
  <button aria-label="Zoom out"><svg width="12" height="22"><path d="M2 11h8" stroke="#484644" stroke-width="3"/></svg></button>
  <input type="range" min="0" max="100" value="50" aria-label="Zoom">
  <button aria-label="Zoom in"><svg width="16" height="22"><path d="M0 11h16M8 3v16" stroke="#484644" stroke-width="3"/></svg></button>
  <span class="pct">100%</span>
  <button aria-label="Fit to page"><svg width="32" height="26" viewBox="0 0 32 26"><path d="M1 2h30v22H1zM6 11V6h5M21 6h5v5M26 15v5h-5M11 20H6v-5" fill="none" stroke="#605e5c" stroke-width="2"/></svg></button>
</footer>
</body>
</html>
```
FILE: styles.css
```css
* { box-sizing: border-box; }
body { margin: 0; min-height: 100vh; display: flex; flex-direction: column; font-family: "Open Sans", "Noto Sans", sans-serif; font-size: 22px; line-height: 32px; color: #252423; background: #f3f2f1; }
h1, h2, h3, p, ul { margin: 0; padding: 0; font-weight: 400; font-size: inherit; }
ul { list-style: none; }
a { color: inherit; text-decoration: none; }
button { font: inherit; color: inherit; background: none; border: 0; padding: 0; margin: 0; text-align: left; }
input { font: inherit; color: inherit; border: 0; background: none; padding: 0; margin: 0; min-width: 0; outline: 0; }
input::placeholder { color: inherit; opacity: 1; }
svg { flex: none; overflow: visible; }
.defs { position: absolute; width: 0; height: 0; }
.dd { width: 14px; height: 10px; display: inline-block; }
.cr { width: 16px; height: 26px; }
.cd { width: 26px; height: 16px; }

/* ribbon */
.ribbon { position: relative; z-index: 2; background: #fafafa; border-top: 2px solid #3b3a39; box-shadow: 0 2px 12px rgba(0, 0, 0, .18); }
.topbar { display: flex; justify-content: space-between; height: 62px; }
.menu { display: grid; grid-template-columns: 101px 154px 130px 180px 124px 176px 120px 151px 198px; margin-left: 15px; font-size: 26px; line-height: 62px; text-align: center; color: #201f1e; }
.menu .on { justify-self: end; width: 78px; height: 62px; margin-right: 31px; font-weight: 600; border-bottom: 6px solid #117865; }
.menu .ctx { background: #fff; color: #117865; font-weight: 600; }
.menu .drill { margin-left: 8px; margin-right: -8px; }
.share { display: flex; align-items: center; gap: 15px; width: 168px; height: 48px; margin: 8px 11px 0 0; padding-left: 14px; border-radius: 8px; background: #117865; color: #fff; font-weight: 600; }
.tools { display: flex; height: 190px; padding: 10px 0 4px; white-space: nowrap; }
.group { display: flex; flex-direction: column; border-right: 2px solid #d2d0ce; }
.group h2 { font-size: 18px; line-height: 18px; text-align: center; color: #323130; }
.items { flex: 1; display: grid; align-items: start; }
.tool { padding-top: 11px; text-align: center; line-height: 32px; }
.tool[disabled] { color: #c8c6c4; }
.big { display: block; width: 64px; height: 64px; margin: 0 auto 3px; }
.clipboard { width: 321px; }
.clipboard .items { grid-template-columns: 94px 210px; padding-left: 10px; }
.clipboard .tool { padding-right: 4px; }
.rows { display: grid; grid-auto-rows: 48px; padding-top: 1px; }
.rows button { display: flex; align-items: center; gap: 9px; }
.data { width: 722px; }
.data .items { grid-template-columns: 88px 106px 118px 72px 88px 104px 122px; padding-left: 13px; }
.queries { width: 235px; }
.queries .items { grid-template-columns: 114px 86px; padding-left: 17px; }
.insert { width: 820px; }
.insert .items { grid-template-columns: 76px 535px 62px 118px; padding-left: 18px; }
.gallery { display: flex; width: 508px; height: 124px; margin: 13px 0 0 10px; border: 2px solid #8a8886; background: #fff; }
.cells { flex: 1; display: grid; grid-template-columns: repeat(8, 52px) 32px; grid-auto-rows: 58px; padding: 15px 0 0 12px; }
.cells button { height: 32px; }
.cells svg { display: block; width: 32px; height: 32px; }
.more { flex: none; width: 32px; display: grid; place-items: center; border-left: 2px solid #8a8886; background: #fafafa; }
.num { font-size: 14px; fill: #1e8bcd; }
.fx { font-family: "Liberation Serif", serif; font-style: italic; font-size: 40px; fill: #b3b0ad; }
.calc { width: 375px; }
.calc .items { grid-template-columns: 144px 100px 96px; padding-left: 16px; }
.sens { width: 147px; }
.pub { width: 120px; }
.cop { width: 264px; }
.cop .items { grid-template-columns: 148px 82px; padding-left: 15px; }
.fold { margin-left: auto; align-self: flex-end; padding: 0 9px 10px 0; line-height: 12px; }

/* main area */
main { flex: 1; display: flex; }
.views { width: 82px; border-right: 2px solid #e1dfdd; }
.views a { display: grid; place-items: center; height: 80px; }
.views svg { width: 48px; height: 48px; }
.views .on { border-left: 6px solid #117865; }
.views .on svg { margin-right: 6px; }
.tag { font-size: 15px; font-weight: 700; fill: #797775; font-family: "Liberation Sans", sans-serif; }
.work { flex: 1; display: flex; flex-direction: column; }
.stage { flex: 1; display: flex; background: #fff; }
.canvas { flex: 1; display: flex; flex-direction: column; padding: 30px 0 16px; }
.canvas h1 { height: 108px; margin: 0 144px 0 42px; padding-left: 28px; background: #666; color: #fff; font-size: 50px; line-height: 98px; text-align: center; }
.visual { position: relative; height: 976px; margin: 61px 83px 0 229px; border: 2px solid #605e5c; padding: 49px 24px 0 25px; }
.h { position: absolute; width: 24px; height: 24px; margin: -12px; border: 3px solid #605e5c; border-radius: 50%; background: #fff; }
.nw, .n, .ne { top: 0; }
.w, .e { top: 50%; }
.sw, .s, .se { top: 100%; }
.nw, .w, .sw { left: 0; }
.n, .s { left: 50%; }
.ne, .e, .se { left: 100%; }
.vmore { position: absolute; right: 8px; top: -34px; line-height: 8px; }
.side { position: absolute; left: -73px; top: -1px; display: grid; gap: 24px; }
.side button { display: grid; place-items: center; width: 56px; height: 56px; border: 2px solid #d2d0ce; border-radius: 4px; background: #e1dfdd; box-shadow: 0 4px 8px rgba(0, 0, 0, .16); }
.side svg { width: 40px; height: 40px; }
.ask { display: flex; align-items: center; gap: 14px; margin: 0 -10px 0 -8px; }
.ask input { flex: 1; height: 64px; padding-left: 32px; border: 2px solid #a6a6a6; border-radius: 4px; font-size: 26px; color: #767676; }
.conv { margin-left: 2px; }
.try { margin-top: 30px; font-size: 30px; line-height: 40px; }
.cards { display: grid; grid-template-columns: repeat(4, 1fr); gap: 24px; margin: 23px 23px 0 0; }
.cards button { display: flex; align-items: flex-start; height: 125px; padding: 28px 42px 0; border-radius: 4px; background: #118dff; color: #fff; font-size: 26px; line-height: 36px; white-space: nowrap; box-shadow: 0 2px 6px rgba(0, 0, 0, .2); }
.fewer { display: block; margin-top: 47px; font-size: 27px; line-height: 40px; text-align: right; color: #117865; }
.edge { margin: auto 0 0 4px; border-top: 4px dotted #605e5c; }

.filters { width: 402px; border-left: 2px solid #b3b0ad; }
.filters > header { display: flex; align-items: center; height: 78px; padding: 0 18px 0 22px; }
.filters h2 { flex: 1; margin-left: 14px; font-size: 30px; font-weight: 600; }
.eye { margin-right: 34px; }
.search { display: flex; align-items: center; }
.search input { flex: 1; }
.filters .search { height: 70px; margin: 12px 24px 8px 16px; padding-left: 20px; gap: 18px; border: 2px solid #b3b0ad; border-radius: 4px; font-size: 24px; }
.filters section { padding: 33px 15px 0 16px; }
.filters section:nth-of-type(1) { border-top: 2px solid #b3b0ad; }
.filters section + section { padding-top: 53px; }
.filters h3 { display: flex; justify-content: space-between; align-items: center; padding-right: 8px; }
.well { height: 92px; margin-top: 18px; border: 2px solid #c8c6c4; border-radius: 4px; line-height: 88px; text-align: center; }

.pages { display: flex; height: 70px; }
.dev { display: flex; align-items: center; justify-content: center; width: 48px; height: 58px; margin-left: 20px; }
.dev.on { border-bottom: 6px solid #117865; height: 61px; border-radius: 2px; }
.dev + .dev { margin-left: 40px; }
.arrows { display: flex; align-items: center; gap: 34px; margin: 0 13px 0 31px; }
.page { width: 242px; padding-top: 3px; text-align: center; line-height: 66px; background: #fff; border-left: 2px solid #b3b0ad; }
.page.on { width: 184px; font-weight: 600; border-right: 2px solid #d2d0ce; border-bottom: 8px solid #117865; }
.add { display: grid; place-items: center; width: 78px; background: #117865; }

/* right panes */
.pane { width: 362px; border-left: 2px solid #e1dfdd; background: #f3f2f1; }
.pane > header { display: flex; align-items: center; gap: 16px; height: 78px; padding: 0 15px 0 16px; }
.pane h2 { flex: 1; font-size: 30px; font-weight: 600; }
.format { display: flex; flex-direction: column; }
.format .search { height: 54px; margin: 5px 16px 0; padding-left: 14px; gap: 13px; border: 2px solid #797775; border-radius: 4px; font-size: 26px; color: #484644; }
.tabs { display: flex; align-items: center; margin: 26px 32px 0 24px; font-size: 26px; line-height: 50px; }
.tabs a { border-bottom: 4px solid transparent; margin-right: 32px; }
.tabs .on { font-weight: 600; border-color: #117865; }
.tabs svg { margin-left: auto; }
.scroll { position: relative; flex: 1; margin-top: 28px; }
.sec { display: flex; align-items: center; gap: 13px; width: 100%; height: 82px; padding: 0 16px 0 20px; font-weight: 600; border-bottom: 2px solid #e1dfdd; }
.sec.first { gap: 6px; height: 80px; padding-left: 16px; border: 0; }
.sec.last { border: 0; }
.body { padding: 16px 16px 18px; background: #e1dfdd; }
.card { display: flex; align-items: center; gap: 12px; height: 80px; margin-bottom: 16px; padding: 0 16px 0 20px; border-radius: 8px; background: #f3f2f1; box-shadow: 0 3px 6px rgba(0, 0, 0, .2); font-weight: 600; }
.card.open { display: block; height: auto; padding: 23px 16px 16px; font-weight: 400; }
.head { display: flex; align-items: center; gap: 6px; height: 36px; margin-bottom: 22px; font-weight: 600; }
.card.open label { display: block; }
.spin { display: flex; align-items: center; width: 140px; height: 48px; margin: 7px 0 17px; padding: 0 5px 0 8px; border: 2px solid #8a8886; border-radius: 4px; background: #fff; color: #605e5c; }
.spin input { flex: 1; }
.spin svg { width: 18px; height: 30px; }
.spin:last-child { margin-bottom: 0; }
.card.open .lock { display: flex; align-items: center; margin-bottom: 24px; }
.toggle { display: flex; align-items: center; justify-content: center; gap: 3px; width: 64px; height: 32px; margin-left: auto; border: 2px solid #797775; border-radius: 16px; background: #fff; color: #605e5c; font-size: 18px; font-weight: 400; line-height: 28px; }
.toggle input { appearance: none; width: 16px; height: 16px; border-radius: 50%; background: #605e5c; }
.toggle.on { background: #117865; border-color: #117865; color: #fff; }
.toggle.on input { background: #fff; }
.reset { display: flex; align-items: center; gap: 12px; height: 48px; padding-left: 3px; color: #a19f9d; }
.bar { position: absolute; right: 0; top: 0; width: 12px; height: 1126px; border-radius: 6px; background: #8a8886; }

.fields .search { height: 48px; margin: 13px 9px 0; padding-left: 24px; gap: 12px; border: 2px solid #d1d1d1; border-bottom-color: #616161; border-radius: 8px; background: #fff; color: #707070; font-size: 26px; }
.fields ul { padding: 19px 0 0 31px; }
.fields li { display: flex; align-items: center; height: 48px; }
.fields li .cr { margin-right: 9px; }
.fields li .cr + svg { margin-right: 6px; }
.rail { display: flex; flex-direction: column; width: 65px; border-left: 2px solid #e1dfdd; background: #faf9f8; }
.rail button { display: grid; place-items: center; height: 64px; }
.rail svg { width: 48px; height: 48px; }
.rail .on { background: #e1dfdd; border: 2px solid #605e5c; }
.rail .gear { margin-top: auto; border-top: 2px solid #e1dfdd; }
.rail .gear svg { width: 42px; height: 42px; }

.status { display: flex; align-items: center; height: 44px; padding: 6px 35px 0 9px; border-top: 2px solid #e1dfdd; color: #484644; }
.pg { flex: 1; }
.status svg { display: block; }
.status input { appearance: none; width: 200px; height: 24px; margin: 0 14px 0 8px; background: linear-gradient(#605e5c, #605e5c) center / 100% 2px no-repeat; }
.status input::-webkit-slider-thumb { appearance: none; width: 8px; height: 24px; background: #605e5c; }
.pct { margin: 0 26px 0 26px; color: #605e5c; }
```
